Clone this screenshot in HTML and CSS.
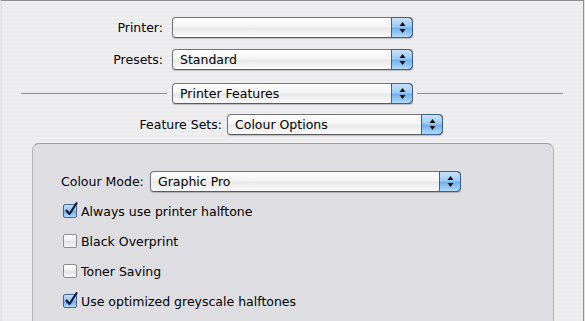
FILE: index.html
```html
<!DOCTYPE html>
<html>
<head>
    <meta charset="UTF-8">
    <title>Print - Printer Features</title>
    <link rel="stylesheet" href="styles.css">
</head>
<body>
    <div class="sheet">
        <!-- top popups -->
        <div class="row row-printer">
            <label class="lbl lbl-main">Printer:</label>
            <div class="popup popup-main">
                <span class="popup-text"></span>
                <span class="stepper"><svg width="7" height="11" viewBox="0 0 7 11"><path d="M3.5 0 L6.5 4 H0.5Z M0.5 7 H6.5 L3.5 11Z" fill="#111"/></svg></span>
            </div>
        </div>
        <div class="row row-presets">
            <label class="lbl lbl-main">Presets:</label>
            <div class="popup popup-main">
                <span class="popup-text">Standard</span>
                <span class="stepper"><svg width="7" height="11" viewBox="0 0 7 11"><path d="M3.5 0 L6.5 4 H0.5Z M0.5 7 H6.5 L3.5 11Z" fill="#111"/></svg></span>
            </div>
        </div>
        <div class="row row-pane">
            <span class="rule"></span>
            <div class="popup popup-main">
                <span class="popup-text">Printer Features</span>
                <span class="stepper"><svg width="7" height="11" viewBox="0 0 7 11"><path d="M3.5 0 L6.5 4 H0.5Z M0.5 7 H6.5 L3.5 11Z" fill="#111"/></svg></span>
            </div>
            <span class="rule"></span>
        </div>
        <div class="row row-sets">
            <label class="lbl lbl-sets">Feature Sets:</label>
            <div class="popup popup-sets">
                <span class="popup-text">Colour Options</span>
                <span class="stepper"><svg width="7" height="11" viewBox="0 0 7 11"><path d="M3.5 0 L6.5 4 H0.5Z M0.5 7 H6.5 L3.5 11Z" fill="#111"/></svg></span>
            </div>
        </div>

        <!-- group box -->
        <div class="group">
            <div class="row row-mode">
                <label class="lbl lbl-mode">Colour Mode:</label>
                <div class="popup popup-mode">
                    <span class="popup-text">Graphic Pro</span>
                    <span class="stepper"><svg width="7" height="11" viewBox="0 0 7 11"><path d="M3.5 0 L6.5 4 H0.5Z M0.5 7 H6.5 L3.5 11Z" fill="#111"/></svg></span>
                </div>
            </div>
            <ul class="checks">
                <li><span class="box checked"><svg class="tick" width="16" height="16" viewBox="0 0 16 16"><path d="M3 8 L6.5 12 L14 0.5" fill="none" stroke="#14183a" stroke-width="2.2" stroke-linejoin="round"/></svg></span>Always use printer halftone</li>
                <li><span class="box"></span>Black Overprint</li>
                <li><span class="box"></span>Toner Saving</li>
                <li><span class="box checked"><svg class="tick" width="16" height="16" viewBox="0 0 16 16"><path d="M3 8 L6.5 12 L14 0.5" fill="none" stroke="#14183a" stroke-width="2.2" stroke-linejoin="round"/></svg></span>Use optimized greyscale halftones</li>
            </ul>
        </div>
    </div>
</body>
</html>
```

FILE: styles.css
```css
body {
    margin: 0;
    background: #e4e4e4;
    font: 12.5px "DejaVu Sans", Verdana, sans-serif;
    color: #000;
}
.sheet {
    width: 584px;
    height: 321px;
    overflow: hidden;
    box-sizing: border-box;
    border-top: 1px solid #8c8c8c;
    border-left: 2px solid #e2e2e4;
    border-right: 1px solid #8f8f8f;
    padding-top: 16px;
    background: repeating-linear-gradient(#efeff1 0px, #efeff1 2px, #ebebed 2px, #ebebed 4px);
}
.row {
    display: flex;
    align-items: center;
    height: 21px;
}
.row-presets {
    margin-top: 11px;
}
.row-pane {
    margin-top: 13px;
    padding-left: 19px;
}
.row-sets {
    margin-top: 10px;
}
.lbl {
    text-align: right;
    white-space: nowrap;
}
.lbl-main {
    width: 161px;
    margin-right: 9px;
}
.lbl-sets {
    width: 220px;
    margin-right: 5px;
}
.lbl-mode {
    width: 89px;
    text-align: left;
}
.rule {
    width: 146px;
    height: 1px;
    background: #8a8a8a;
}
.row-pane .popup {
    margin: 0 4px 0 5px;
}

/* aqua popup buttons */
.popup {
    display: flex;
    height: 21px;
    box-sizing: border-box;
    border: 1px solid #737373;
    border-bottom-color: #5a5a5a;
    border-radius: 4px;
    background: linear-gradient(#ffffff, #f4f4f4 45%, #e9e9e9 55%, #fbfbfb);
    box-shadow: 0 1px 1px rgba(0, 0, 0, 0.2);
}
.popup-main {
    width: 241px;
}
.popup-sets {
    width: 216px;
}
.popup-mode {
    width: 311px;
}
.popup-text {
    flex: 1;
    padding-left: 7px;
    line-height: 19px;
    white-space: nowrap;
}
.stepper {
    width: 20px;
    margin: -1px -1px -1px 0;
    display: flex;
    align-items: center;
    justify-content: center;
    border: 1px solid #3f5f8e;
    border-radius: 0 5px 5px 0;
    background: linear-gradient(#c9e2f8, #9ccaf2 45%, #71b0ea 55%, #b2d9fa);
}

/* group box */
.group {
    margin: 8px 0 0 30px;
    width: 522px;
    height: 200px;
    box-sizing: border-box;
    border: 1px solid #b5b5b8;
    border-top-color: #9e9ea0;
    border-radius: 7px;
    background: #dedee2;
    padding: 27px 0 0 28px;
}
.checks {
    list-style: none;
    margin: 12px 0 0 0;
    padding: 0;
}
.checks li {
    display: flex;
    align-items: center;
    height: 14px;
    margin-bottom: 16px;
    white-space: nowrap;
}
.box {
    position: relative;
    width: 14px;
    height: 14px;
    box-sizing: border-box;
    margin: 0 4px 0 2px;
    border: 1px solid #8d8d8d;
    border-radius: 2px;
    background: linear-gradient(#ffffff, #efefef 50%, #e2e2e2 55%, #f8f8f8);
}
.box.checked {
    border-color: #4a6590;
    background: linear-gradient(#c3def7, #93c4ef 50%, #6eaee9 55%, #b4dafa);
}
.tick {
    position: absolute;
    left: -1px;
    top: -3px;
}
```
